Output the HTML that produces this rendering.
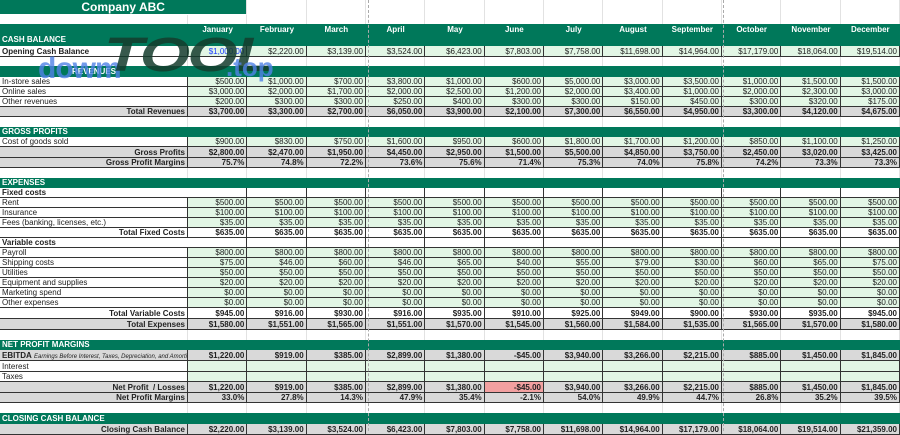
<!DOCTYPE html>
<html><head><meta charset="utf-8"><style>
*{box-sizing:border-box}
body{margin:0;width:900px;height:431px;overflow:hidden;position:relative;background:#fff;font-family:"Liberation Sans",Arial,sans-serif;font-size:8px;color:#222}
.r{position:absolute;left:0;width:900px;display:grid;grid-template-columns:188px repeat(12,1fr)}
.r>span{overflow:hidden;white-space:nowrap;padding:0 2px;border-right:1px solid #e2e2e2;height:100%}
.d>span{background:#e2f6e5;border-right:1px solid #333;border-bottom:1px solid #333;text-align:right}
.d>span:first-child{background:#fff;text-align:left;border-right:1px solid #333}
.t>span{background:#d9d9d9;font-weight:bold;border-right:1px solid #333;border-bottom:1px solid #333;text-align:right}
.e>span{background:#e2f6e5;border-right:1px solid #333;border-bottom:1px solid #333}
.e>span:first-child{background:#fff}
.lab>span{border-right:1px solid #333}
.lab>span:first-child{font-weight:bold}
.wm{position:absolute;font-weight:bold;white-space:nowrap}
.dash{position:absolute;top:0;height:431px;border-left:1px dashed #aaa}
</style></head><body>

<div class="r" style="top:0;height:15px;line-height:15px"><span style="grid-column:1/3;background:#00785a;color:#fff;font-weight:bold;font-size:12px;text-align:center;border-bottom:1px solid #fff">Company ABC</span><span></span><span></span><span></span><span></span><span></span><span></span><span></span><span></span><span></span><span></span><span></span></div>
<div class="r" style="top:15px;height:9px"><span></span><span></span><span></span><span></span><span></span><span></span><span></span><span></span><span></span><span></span><span></span><span></span><span></span></div>

<div class="r" style="top:24px;height:22px;background:#00785a;color:#fff;font-weight:bold;line-height:12px"><span style="border:none;padding-top:11px;line-height:10px">CASH BALANCE</span><span style="border:none;text-align:center">January</span><span style="border:none;text-align:center">February</span><span style="border:none;text-align:center">March</span><span style="border:none;text-align:center">April</span><span style="border:none;text-align:center">May</span><span style="border:none;text-align:center">June</span><span style="border:none;text-align:center">July</span><span style="border:none;text-align:center">August</span><span style="border:none;text-align:center">September</span><span style="border:none;text-align:center">October</span><span style="border:none;text-align:center">November</span><span style="border:none;text-align:center">December</span></div>

<div class="r d" style="top:46px;height:11px;line-height:11px"><span style="font-weight:bold">Opening Cash Balance</span><span style="color:#1a3cff">$1,000.00</span><span>$2,220.00</span><span>$3,139.00</span><span>$3,524.00</span><span>$6,423.00</span><span>$7,803.00</span><span>$7,758.00</span><span>$11,698.00</span><span>$14,964.00</span><span>$17,179.00</span><span>$18,064.00</span><span>$19,514.00</span></div>
<div class="r" style="top:57px;height:9px"><span></span><span></span><span></span><span></span><span></span><span></span><span></span><span></span><span></span><span></span><span></span><span></span><span></span></div>

<div class="r" style="top:66px;height:11px;line-height:11px;background:#00785a;color:#fff;font-weight:bold"><span style="border:none;text-align:center">REVENUES</span></div>
<div class="r d" style="top:77px;height:10px;line-height:10px"><span>In-store sales</span><span>$500.00</span><span>$1,000.00</span><span>$700.00</span><span>$3,800.00</span><span>$1,000.00</span><span>$600.00</span><span>$5,000.00</span><span>$3,000.00</span><span>$3,500.00</span><span>$1,000.00</span><span>$1,500.00</span><span>$1,500.00</span></div>
<div class="r d" style="top:87px;height:10px;line-height:10px"><span>Online sales</span><span>$3,000.00</span><span>$2,000.00</span><span>$1,700.00</span><span>$2,000.00</span><span>$2,500.00</span><span>$1,200.00</span><span>$2,000.00</span><span>$3,400.00</span><span>$1,000.00</span><span>$2,000.00</span><span>$2,300.00</span><span>$3,000.00</span></div>
<div class="r d" style="top:97px;height:10px;line-height:10px"><span>Other revenues</span><span>$200.00</span><span>$300.00</span><span>$300.00</span><span>$250.00</span><span>$400.00</span><span>$300.00</span><span>$300.00</span><span>$150.00</span><span>$450.00</span><span>$300.00</span><span>$320.00</span><span>$175.00</span></div>
<div class="r t" style="top:107px;height:10px;line-height:10px"><span>Total Revenues</span><span>$3,700.00</span><span>$3,300.00</span><span>$2,700.00</span><span>$6,050.00</span><span>$3,900.00</span><span>$2,100.00</span><span>$7,300.00</span><span>$6,550.00</span><span>$4,950.00</span><span>$3,300.00</span><span>$4,120.00</span><span>$4,675.00</span></div>
<div class="r" style="top:117px;height:10px"><span></span><span></span><span></span><span></span><span></span><span></span><span></span><span></span><span></span><span></span><span></span><span></span><span></span></div>

<div class="r" style="top:127px;height:10px;line-height:10px;background:#00785a;color:#fff;font-weight:bold"><span style="border:none">GROSS PROFITS</span></div>
<div class="r d" style="top:137px;height:10px;line-height:10px"><span>Cost of goods sold</span><span>$900.00</span><span>$830.00</span><span>$750.00</span><span>$1,600.00</span><span>$950.00</span><span>$600.00</span><span>$1,800.00</span><span>$1,700.00</span><span>$1,200.00</span><span>$850.00</span><span>$1,100.00</span><span>$1,250.00</span></div>
<div class="r t" style="top:147px;height:11px;line-height:11px"><span>Gross Profits</span><span>$2,800.00</span><span>$2,470.00</span><span>$1,950.00</span><span>$4,450.00</span><span>$2,950.00</span><span>$1,500.00</span><span>$5,500.00</span><span>$4,850.00</span><span>$3,750.00</span><span>$2,450.00</span><span>$3,020.00</span><span>$3,425.00</span></div>
<div class="r t" style="top:158px;height:10px;line-height:10px"><span>Gross Profit Margins</span><span>75.7%</span><span>74.8%</span><span>72.2%</span><span>73.6%</span><span>75.6%</span><span>71.4%</span><span>75.3%</span><span>74.0%</span><span>75.8%</span><span>74.2%</span><span>73.3%</span><span>73.3%</span></div>
<div class="r" style="top:168px;height:10px"><span></span><span></span><span></span><span></span><span></span><span></span><span></span><span></span><span></span><span></span><span></span><span></span><span></span></div>

<div class="r" style="top:178px;height:10px;line-height:10px;background:#00785a;color:#fff;font-weight:bold"><span style="border:none">EXPENSES</span></div>
<div class="r lab" style="top:188px;height:10px;line-height:10px;border-bottom:1px solid #333"><span style="border-right:none">Fixed costs</span><span></span><span></span><span></span><span></span><span></span><span></span><span></span><span></span><span></span><span></span><span></span><span></span></div>
<div class="r d" style="top:198px;height:10px;line-height:10px"><span>Rent</span><span>$500.00</span><span>$500.00</span><span>$500.00</span><span>$500.00</span><span>$500.00</span><span>$500.00</span><span>$500.00</span><span>$500.00</span><span>$500.00</span><span>$500.00</span><span>$500.00</span><span>$500.00</span></div>
<div class="r d" style="top:208px;height:10px;line-height:10px"><span>Insurance</span><span>$100.00</span><span>$100.00</span><span>$100.00</span><span>$100.00</span><span>$100.00</span><span>$100.00</span><span>$100.00</span><span>$100.00</span><span>$100.00</span><span>$100.00</span><span>$100.00</span><span>$100.00</span></div>
<div class="r d" style="top:218px;height:10px;line-height:10px"><span>Fees (banking, licenses, etc.)</span><span>$35.00</span><span>$35.00</span><span>$35.00</span><span>$35.00</span><span>$35.00</span><span>$35.00</span><span>$35.00</span><span>$35.00</span><span>$35.00</span><span>$35.00</span><span>$35.00</span><span>$35.00</span></div>
<div class="r t" style="top:228px;height:10px;line-height:10px"><span style="background:#fff">Total Fixed Costs</span><span style="background:#fff">$635.00</span><span style="background:#fff">$635.00</span><span style="background:#fff">$635.00</span><span style="background:#fff">$635.00</span><span style="background:#fff">$635.00</span><span style="background:#fff">$635.00</span><span style="background:#fff">$635.00</span><span style="background:#fff">$635.00</span><span style="background:#fff">$635.00</span><span style="background:#fff">$635.00</span><span style="background:#fff">$635.00</span><span style="background:#fff">$635.00</span></div>
<div class="r lab" style="top:238px;height:10px;line-height:10px;border-bottom:1px solid #333"><span style="border-right:none">Variable costs</span><span></span><span></span><span></span><span></span><span></span><span></span><span></span><span></span><span></span><span></span><span></span><span></span></div>
<div class="r d" style="top:248px;height:10px;line-height:10px"><span>Payroll</span><span>$800.00</span><span>$800.00</span><span>$800.00</span><span>$800.00</span><span>$800.00</span><span>$800.00</span><span>$800.00</span><span>$800.00</span><span>$800.00</span><span>$800.00</span><span>$800.00</span><span>$800.00</span></div>
<div class="r d" style="top:258px;height:10px;line-height:10px"><span>Shipping costs</span><span>$75.00</span><span>$46.00</span><span>$60.00</span><span>$46.00</span><span>$65.00</span><span>$40.00</span><span>$55.00</span><span>$79.00</span><span>$30.00</span><span>$60.00</span><span>$65.00</span><span>$75.00</span></div>
<div class="r d" style="top:268px;height:10px;line-height:10px"><span>Utilities</span><span>$50.00</span><span>$50.00</span><span>$50.00</span><span>$50.00</span><span>$50.00</span><span>$50.00</span><span>$50.00</span><span>$50.00</span><span>$50.00</span><span>$50.00</span><span>$50.00</span><span>$50.00</span></div>
<div class="r d" style="top:278px;height:10px;line-height:10px"><span>Equipment and supplies</span><span>$20.00</span><span>$20.00</span><span>$20.00</span><span>$20.00</span><span>$20.00</span><span>$20.00</span><span>$20.00</span><span>$20.00</span><span>$20.00</span><span>$20.00</span><span>$20.00</span><span>$20.00</span></div>
<div class="r d" style="top:288px;height:10px;line-height:10px"><span>Marketing spend</span><span>$0.00</span><span>$0.00</span><span>$0.00</span><span>$0.00</span><span>$0.00</span><span>$0.00</span><span>$0.00</span><span>$0.00</span><span>$0.00</span><span>$0.00</span><span>$0.00</span><span>$0.00</span></div>
<div class="r d" style="top:298px;height:10px;line-height:10px"><span>Other expenses</span><span>$0.00</span><span>$0.00</span><span>$0.00</span><span>$0.00</span><span>$0.00</span><span>$0.00</span><span>$0.00</span><span>$0.00</span><span>$0.00</span><span>$0.00</span><span>$0.00</span><span>$0.00</span></div>
<div class="r t" style="top:308px;height:11px;line-height:11px"><span style="background:#fff">Total Variable Costs</span><span style="background:#fff">$945.00</span><span style="background:#fff">$916.00</span><span style="background:#fff">$930.00</span><span style="background:#fff">$916.00</span><span style="background:#fff">$935.00</span><span style="background:#fff">$910.00</span><span style="background:#fff">$925.00</span><span style="background:#fff">$949.00</span><span style="background:#fff">$900.00</span><span style="background:#fff">$930.00</span><span style="background:#fff">$935.00</span><span style="background:#fff">$945.00</span></div>
<div class="r t" style="top:319px;height:11px;line-height:11px"><span>Total Expenses</span><span>$1,580.00</span><span>$1,551.00</span><span>$1,565.00</span><span>$1,551.00</span><span>$1,570.00</span><span>$1,545.00</span><span>$1,560.00</span><span>$1,584.00</span><span>$1,535.00</span><span>$1,565.00</span><span>$1,570.00</span><span>$1,580.00</span></div>
<div class="r" style="top:330px;height:10px"><span></span><span></span><span></span><span></span><span></span><span></span><span></span><span></span><span></span><span></span><span></span><span></span><span></span></div>

<div class="r" style="top:340px;height:10px;line-height:10px;background:#00785a;color:#fff;font-weight:bold"><span style="border:none">NET PROFIT MARGINS</span></div>
<div class="r t" style="top:350px;height:11px;line-height:11px"><span style="text-align:left"><b>EBITDA</b> <i style="font-weight:normal;font-size:6px">Earnings Before Interest, Taxes, Depreciation, and Amortization</i></span><span>$1,220.00</span><span>$919.00</span><span>$385.00</span><span>$2,899.00</span><span>$1,380.00</span><span>-$45.00</span><span>$3,940.00</span><span>$3,266.00</span><span>$2,215.00</span><span>$885.00</span><span>$1,450.00</span><span>$1,845.00</span></div>
<div class="r e" style="top:361px;height:11px;line-height:11px"><span>Interest</span><span></span><span></span><span></span><span></span><span></span><span></span><span></span><span></span><span></span><span></span><span></span><span></span></div>
<div class="r e" style="top:372px;height:10px;line-height:10px"><span>Taxes</span><span></span><span></span><span></span><span></span><span></span><span></span><span></span><span></span><span></span><span></span><span></span><span></span></div>
<div class="r t" style="top:382px;height:11px;line-height:11px"><span>Net Profit &nbsp;/ Losses</span><span>$1,220.00</span><span>$919.00</span><span>$385.00</span><span>$2,899.00</span><span>$1,380.00</span><span style="background:#f2a0a0">-$45.00</span><span>$3,940.00</span><span>$3,266.00</span><span>$2,215.00</span><span>$885.00</span><span>$1,450.00</span><span>$1,845.00</span></div>
<div class="r t" style="top:393px;height:10px;line-height:10px"><span>Net Profit Margins</span><span>33.0%</span><span>27.8%</span><span>14.3%</span><span>47.9%</span><span>35.4%</span><span>-2.1%</span><span>54.0%</span><span>49.9%</span><span>44.7%</span><span>26.8%</span><span>35.2%</span><span>39.5%</span></div>
<div class="r" style="top:403px;height:10px"><span></span><span></span><span></span><span></span><span></span><span></span><span></span><span></span><span></span><span></span><span></span><span></span><span></span></div>

<div class="r" style="top:413px;height:11px;line-height:11px;background:#00785a;color:#fff;font-weight:bold"><span style="border:none">CLOSING CASH BALANCE</span></div>
<div class="r t" style="top:424px;height:11px;line-height:11px"><span>Closing Cash Balance</span><span>$2,220.00</span><span>$3,139.00</span><span>$3,524.00</span><span>$6,423.00</span><span>$7,803.00</span><span>$7,758.00</span><span>$11,698.00</span><span>$14,964.00</span><span>$17,179.00</span><span>$18,064.00</span><span>$19,514.00</span><span>$21,359.00</span></div>

<div class="dash" style="left:368px"></div>
<div class="dash" style="left:723px"></div>

<div class="wm" style="left:38px;top:52px;font-size:30px;color:rgba(80,130,230,0.8);letter-spacing:-1px">dowm</div>
<div class="wm" style="left:104px;top:28px;font-size:48px;font-style:italic;color:rgba(20,60,45,0.85);letter-spacing:-2px;transform:scaleX(1.35);transform-origin:left top">TOOL</div>
<div class="wm" style="left:226px;top:52px;font-size:26px;color:rgba(80,130,230,0.8)">.top</div>
</body></html>
